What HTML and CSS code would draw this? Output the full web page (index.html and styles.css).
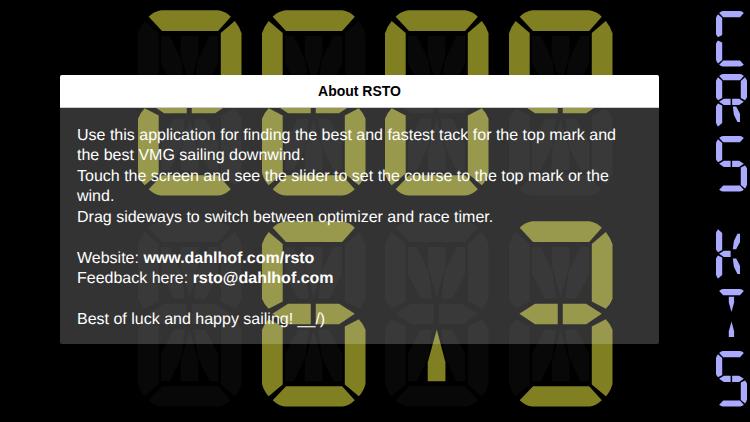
FILE: index.html
```
<!DOCTYPE html>
<html lang="en">
<head>
  <meta charset="UTF-8">
  <title>RSTO</title>
  <meta name="viewport" content="width=device-width, initial-scale=1.0">
  <link rel="stylesheet" href="styles.css">
</head>
<body>

<main class="screen">
  <div class="readout" id="readout"></div>
  <div class="units">
    <div class="unit" id="unit-top"></div>
    <div class="unit" id="unit-bottom"></div>
  </div>
</main>

<!-- ABOUT -->
<section class="about" role="dialog" aria-labelledby="about-title">
  <h1 class="about-title" id="about-title">About RSTO</h1>
  <div class="about-text">
    <p>Use this application for finding the best and fastest tack for the top mark and the best VMG sailing downwind.</p>
    <p>Touch the screen and see the slider to set the course to the top mark or the wind.</p>
    <p>Drag sideways to switch between optimizer and race timer.</p>
    <p class="block">Website: <a href="http://www.dahlhof.com/rsto">www.dahlhof.com/rsto</a><br>
    Feedback here: <a href="mailto:rsto@dahlhof.com">rsto@dahlhof.com</a></p>
    <p class="block">Best of luck and happy sailing! __/)</p>
  </div>
</section>

<script src="segments.js"></script>

</body>
</html>
```

FILE: styles.css
```
html, body {
  margin: 0;
  padding: 0;
  background: #000;
  color: white;
  font-family: 'Helvetica Neue', 'Liberation Sans', Arial, sans-serif;
}

.screen {
  display: flex;
  gap: 104px;
  padding: 10px 3px 14px 138px;
}

/* big digits */
.readout {
  flex: 1;
  display: grid;
  grid-template-columns: repeat(4, 1fr);
  gap: 25px 20px;
  align-content: start;
}

.digit {
  display: block;
  width: 100%;
  overflow: visible;
}

.off {
  fill: #080808;
}

.on {
  fill: #808022;
}

/* small letters on the right */
.units {
  width: 31px;
  display: flex;
  flex-direction: column;
  gap: 34px;
  padding-top: 1px;
}

.unit {
  display: flex;
  flex-direction: column;
  gap: 7px;
}

.unit .off {
  fill: none;
}

.unit .on {
  fill: #aaaaff;
}

/* about box */
.about {
  position: absolute;
  top: 75px;
  left: 60px;
  right: 91px;
  background: rgba(255, 255, 255, 0.2);
  border-radius: 2px;
  overflow: hidden;
}

.about-title {
  margin: 0;
  background: white;
  color: black;
  font-size: 14px;
  line-height: 32px;
  text-align: center;
  border-bottom: 1px solid #ccc;
}

.about-text {
  display: flex;
  flex-direction: column;
  gap: 1px;
  padding: 18px 24px 14px 17px;
  font-size: 16px;
  line-height: 20px;
  text-rendering: geometricPrecision;
}

.about-text p {
  margin: 0;
}

.about-text .block {
  margin-top: 20px;
}

.about-text a {
  color: white;
  font-weight: bold;
  text-decoration: none;
}
```

FILE: segments.js
```
const segments = {
  a: 'M32 20 Q50 3 70 1 H240 Q260 3 278 20 L240 63 H72 Z',
  b: 'M290 33 Q304 50 310 70 V233 Q304 250 290 263 L248 241 V69 Z',
  c: 'M290 294 Q304 308 310 326 V488 Q304 510 290 525 L248 490 V316 Z',
  d: 'M32 537 L72 495 H240 L278 537 Q260 554 240 556 H70 Q50 554 32 537 Z',
  e: 'M20 294 Q6 308 0 326 V488 Q6 510 20 525 L62 490 V316 Z',
  f: 'M20 33 Q6 50 0 70 V233 Q6 250 20 263 L62 241 V69 Z',
  g: 'M31 278 L78 248 H146 V309 H78 Z',
  h: 'M161 248 H231 L278 278 L231 309 H161 Z',
  i: 'M69 78 H95 L130 150 L141 232 H107 L69 160 Z',
  j: 'M128 78 H181 V135 L155 231 L128 135 Z',
  k: 'M240 78 H214 L179 150 L168 232 H202 L240 160 Z',
  l: 'M69 480 H95 L130 408 L141 326 H107 L69 398 Z',
  m: 'M155 325 L181 423 V480 H128 V423 Z',
  n: 'M240 480 H214 L179 408 L168 326 H202 L240 398 Z'
};

function drawDigit(lit) {
  const paths = Object.keys(segments).map(s =>
    `<path class="${lit.includes(s) ? 'on' : 'off'}" d="${segments[s]}"/>`
  );
  return `<svg class="digit" viewBox="0 0 310 557">${paths.join('')}</svg>`;
}

function show(id, digits) {
  document.getElementById(id).innerHTML = digits.map(drawDigit).join('');
}

show('readout', [
  'abdegh', 'acdefgh', 'abcdef', 'abfgh',
  '', 'acdefgh', 'm', 'abcdgh'
]);
show('unit-top', ['adef', 'abefghn', 'acdfgh']);
show('unit-bottom', ['efgkn', 'ajm', 'acdfgh']);
```
